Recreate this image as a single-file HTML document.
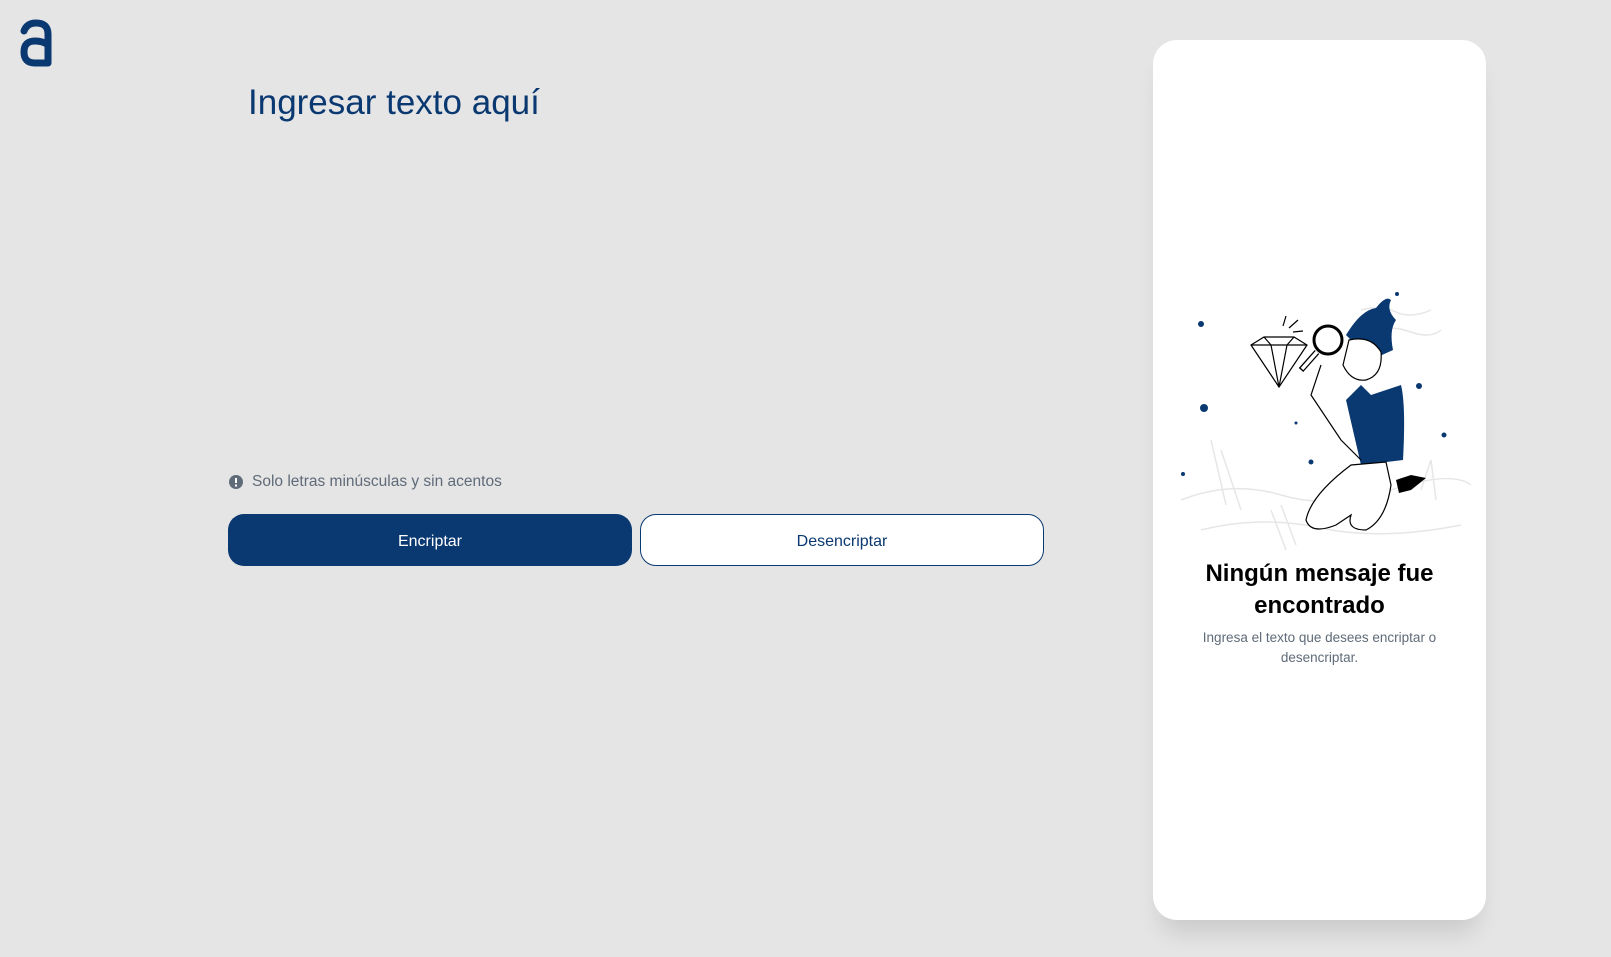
<!DOCTYPE html>
<html><head><meta charset="utf-8">
<style>
html,body{margin:0;padding:0;width:1611px;height:957px;background:#e5e5e5;overflow:hidden;font-family:"Liberation Sans",sans-serif;}
.logo{position:absolute;left:19px;top:19px;}
h1{position:absolute;left:248px;top:83px;margin:0;font-weight:normal;font-size:35px;color:#0a3871;}
.hint{position:absolute;left:229px;top:473px;font-size:15.5px;color:#5f6b78;display:flex;align-items:center;gap:9px;}
.btn{position:absolute;top:514px;width:404px;height:52px;border-radius:16px;box-sizing:border-box;font-size:16px;display:flex;align-items:center;justify-content:center;padding-top:4px;}
.b1{left:228px;background:#0a3871;color:#fff;}
.b2{left:640px;background:#fff;border:1px solid #0a3871;color:#0a3871;}
.card{position:absolute;left:1153px;top:40px;width:333px;height:880px;background:#fff;border-radius:24px;box-shadow:0 20px 24px -8px rgba(0,0,0,.12);}
.card h2{position:absolute;left:0;width:333px;top:518px;margin:0;text-align:center;font-size:24px;line-height:32px;color:#000;font-weight:bold;}
.card p{position:absolute;left:20px;width:293px;top:588px;margin:0;text-align:center;font-size:13.5px;line-height:20px;color:#5f6b78;}
</style></head><body>
<svg class="logo" width="34" height="50" viewBox="0 0 34 50"><path d="M5 12 Q8 4 17 4 Q29 4 29 15 V44 M29 26 Q24 22 16 22 Q5 22 5 33 Q5 44 16 44 H29" fill="none" stroke="#0a3871" stroke-width="7" stroke-linecap="round" stroke-linejoin="round"/></svg>
<h1>Ingresar texto aquí</h1>
<div class="hint"><svg width="14" height="14" viewBox="0 0 14 14"><circle cx="7" cy="7" r="7" fill="#5f6b78"/><rect x="6" y="3" width="2" height="5" fill="#fff"/><rect x="6" y="9.5" width="2" height="2" fill="#fff"/></svg>Solo letras minúsculas y sin acentos</div>
<div class="btn b1">Encriptar</div>
<div class="btn b2">Desencriptar</div>
<div class="card">
<svg style="position:absolute;left:18px;top:250px" width="300" height="270" viewBox="0 0 300 270">
<g fill="none" stroke="#e6e6e6" stroke-width="1.5">
<path d="M10 210 Q60 190 110 205 T220 200 T300 195"/><path d="M30 240 Q90 225 150 238 T290 235"/><path d="M40 150 L55 215 M50 160 L70 220"/><path d="M100 220 L115 260 M110 215 L125 255"/><path d="M250 200 L260 170 L265 210"/><path d="M190 20 Q210 15 225 22 T260 20"/><path d="M200 40 Q220 35 240 42 T270 40"/>
</g>
<g fill="#0a3871"><circle cx="30" cy="34" r="3"/><circle cx="33" cy="118" r="4"/><circle cx="12" cy="184" r="2"/><circle cx="226" cy="4" r="2"/><circle cx="248" cy="96" r="3"/><circle cx="273" cy="145" r="2.5"/><circle cx="140" cy="172" r="2.5"/><circle cx="125" cy="133" r="1.5"/></g>
<g fill="none" stroke="#000" stroke-width="1.2"><path d="M80 55 L93 47 H123 L136 55 L108 97 Z M80 55 H136 M93 47 L100 55 L108 97 L116 55 L123 47"/><path d="M112 36 L115 26 M118 38 L127 30 M122 42 L132 41"/></g>
<path d="M175 45 Q190 20 205 18 Q215 5 220 10 Q215 20 225 30 Q218 40 222 60 L200 70 Z" fill="#0a3871"/>
<path d="M178 50 Q200 45 210 62 Q212 85 195 90 Q180 92 172 75 Z" fill="#fff" stroke="#000" stroke-width="1.2"/>
<path d="M190 95 L200 105 L230 95 Q235 115 232 170 L190 175 L175 110 Z" fill="#0a3871"/>
<path d="M150 75 L140 105 L170 150 L190 170" fill="none" stroke="#000" stroke-width="1.2"/>
<path d="M180 175 Q140 205 135 230 Q140 245 165 235 L180 225 Q175 240 195 240 Q215 230 220 195 L215 172 Z" fill="#fff" stroke="#000" stroke-width="1.2"/>
<path d="M225 190 L240 185 L255 188 L240 200 L228 203 Z" fill="#000"/>
<circle cx="157" cy="50" r="14" fill="none" stroke="#000" stroke-width="3"/>
<path d="M146 62 L130 80" stroke="#000" stroke-width="6"/><path d="M146 62 L131 79" stroke="#fff" stroke-width="3.5"/>
</svg>
<h2>Ningún mensaje fue<br>encontrado</h2>
<p>Ingresa el texto que desees encriptar o desencriptar.</p>
</div>
</body></html>
